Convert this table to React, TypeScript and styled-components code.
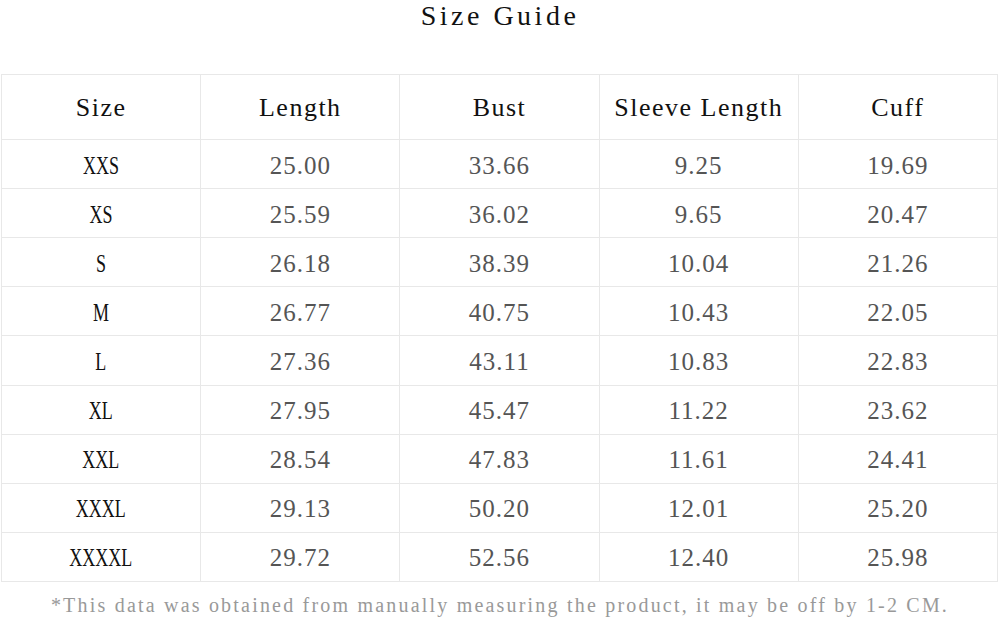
import React from "react";
import styled, { createGlobalStyle } from "styled-components";

const Global = createGlobalStyle`
  html, body { margin: 0; padding: 0; background: #fff; }
  body { font-family: "Liberation Serif", "DejaVu Serif", serif; }
`;

const Page = styled.div`
  width: 1000px;
  height: 617px;
  background: #fff;
  display: flex;
  flex-direction: column;
  overflow: hidden;
`;

const TitleBar = styled.div`
  height: 74px;
  display: flex;
  justify-content: center;
  align-items: flex-start;
`;

const Text = styled.span<{ $size: number; $spacing: number; $color: string; $scale?: number }>`
  display: inline-block;
  font-size: ${(p) => p.$size}px;
  letter-spacing: ${(p) => p.$spacing}px;
  color: ${(p) => p.$color};
  transform: scaleX(${(p) => p.$scale ?? 1});
  white-space: nowrap;
  line-height: 1;
`;

const Title = styled(Text)`
  line-height: 32px;
`;

const Table = styled.div`
  margin-left: 1px;
  width: 997px;
  display: grid;
  grid-template-columns: repeat(5, 1fr);
  grid-template-rows: 65px repeat(9, 1fr);
  height: 508px;
  border-top: 1px solid #e8e8e8;
  border-left: 1px solid #e8e8e8;
  box-sizing: border-box;
`;

const Cell = styled.div`
  display: flex;
  align-items: center;
  justify-content: center;
  border-right: 1px solid #e8e8e8;
  border-bottom: 1px solid #e8e8e8;
  padding-top: 2px;
  box-sizing: border-box;
`;

const Note = styled.div`
  flex: 1;
  display: flex;
  justify-content: center;
  align-items: center;
  padding-top: 10px;
`;

const headers = ["Size", "Length", "Bust", "Sleeve Length", "Cuff"];
const rows: string[][] = [
  ["XXS", "25.00", "33.66", "9.25", "19.69"],
  ["XS", "25.59", "36.02", "9.65", "20.47"],
  ["S", "26.18", "38.39", "10.04", "21.26"],
  ["M", "26.77", "40.75", "10.43", "22.05"],
  ["L", "27.36", "43.11", "10.83", "22.83"],
  ["XL", "27.95", "45.47", "11.22", "23.62"],
  ["XXL", "28.54", "47.83", "11.61", "24.41"],
  ["XXXL", "29.13", "50.20", "12.01", "25.20"],
  ["XXXXL", "29.72", "52.56", "12.40", "25.98"],
];

export default function App() {
  return (
    <Page>
      <Global />
      <TitleBar>
        <Title $size={28} $spacing={3.5} $color="#111">Size Guide</Title>
      </TitleBar>
      <Table>
        {headers.map((h) => (
          <Cell key={h}>
            <Text $size={26} $spacing={1.5} $color="#111">{h}</Text>
          </Cell>
        ))}
        {rows.map((r) =>
          r.map((v, i) => (
            <Cell key={r[0] + i}>
              {i === 0 ? (
                <Text $size={25} $spacing={0} $scale={0.72} $color="#111">{v}</Text>
              ) : (
                <Text $size={25} $spacing={1} $color="#555">{v}</Text>
              )}
            </Cell>
          ))
        )}
      </Table>
      <Note>
        <Text $size={20} $spacing={2.2} $color="#999">
          *This data was obtained from manually measuring the product, it may be off by 1-2 CM.
        </Text>
      </Note>
    </Page>
  );
}
